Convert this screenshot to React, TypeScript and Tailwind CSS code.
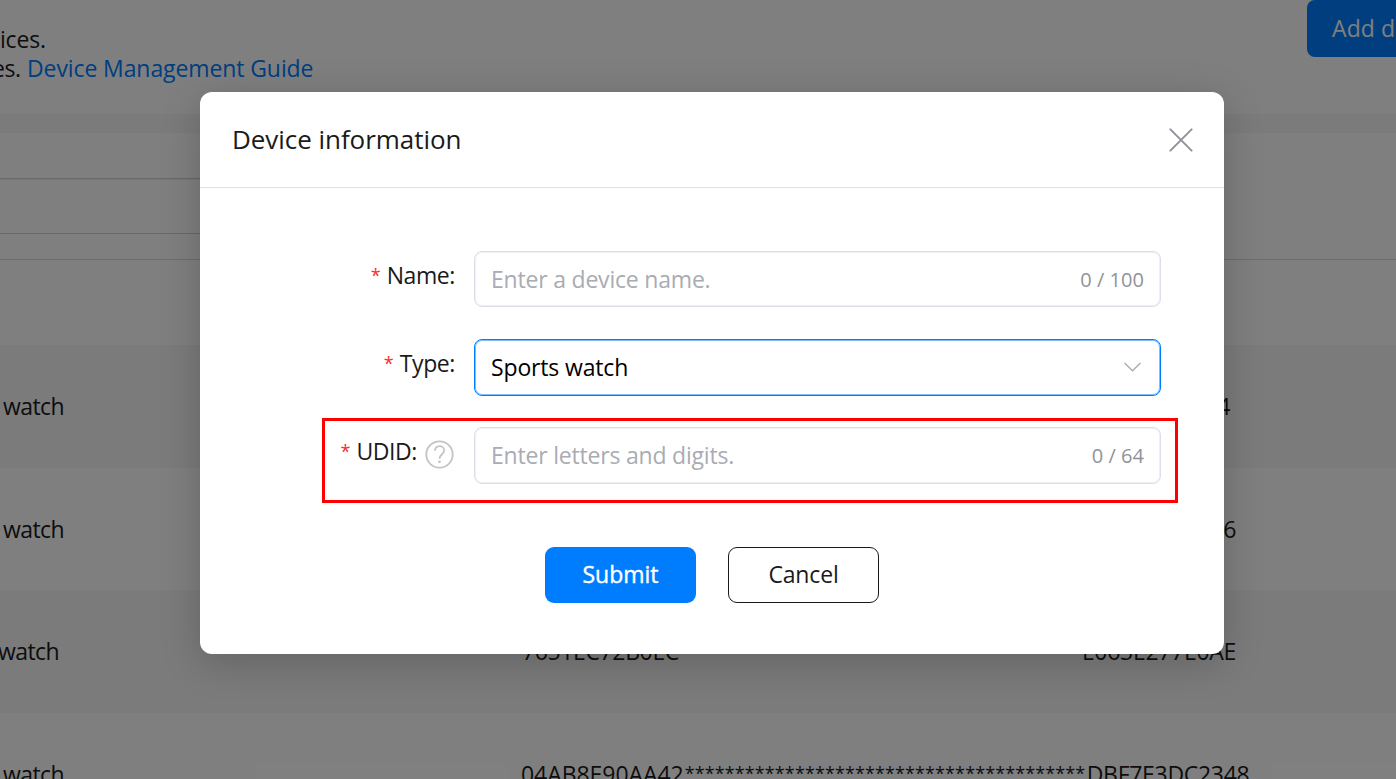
import type { ReactNode } from 'react';

const rows = [
  { type: 'watch', left: 3, a: '', b: '4', right: 1230, shade: true },
  { type: 'watch', left: 3, a: '', b: '6', right: 1236, shade: false },
  { type: 'watch', left: -2, a: '7651EC72B0EC', b: 'E063E277E0AE', right: 1236, shade: true },
];

function Background() {
  return (
    <div className="flex h-[779px] w-full flex-col bg-white text-[#1a1a1a]">
      <header className="flex h-[114px] justify-between">
        <div className="flex w-[320px] flex-col items-start whitespace-nowrap pt-[25px] leading-[29px]">
          <p className="tracking-[-0.2px]">ices.</p>
          <p className="-ml-[8px] flex">
            <span className="w-[35px] tracking-[-0.5px]">es.</span>
            <a className="tracking-[-0.1px] text-[#007dff]">Device Management Guide</a>
          </p>
        </div>
        <button className="-mr-[70px] h-[57px] w-[159px] overflow-hidden whitespace-nowrap rounded-[8px] bg-[#007dff] pl-[25px] text-left tracking-[0.1px] text-white">
          Add device
        </button>
      </header>
      <div className="h-[19px] bg-[#f6f6f6]" />
      <div className="flex h-[127px] flex-col border-b border-[#d8d8d8] pt-[45px]">
        <div className="h-[56px] w-[600px] border-y border-[#d0d3dc] shadow-[inset_0_1px_0_#eceef2]" />
      </div>
      <div className="h-[85px]" />
      {rows.map((r, i) => (
        <div key={i} className={r.shade ? 'flex h-[122.7px] items-center bg-[#f6f6f6]' : 'flex h-[122.7px] items-center pt-px'}>
          <span className="w-[524px] tracking-[-0.6px]" style={{ paddingLeft: Math.max(r.left, 0), marginLeft: Math.min(r.left, 0) }}>
            {r.type}
          </span>
          <span className="w-[200px] tracking-[-0.38px]">{r.a}</span>
          <span className="text-right tracking-[-0.3px]" style={{ width: r.right - 724 - Math.min(r.left, 0) }}>
            {r.b}
          </span>
        </div>
      ))}
      <div className="flex h-[66px] items-start overflow-hidden whitespace-nowrap pt-[44px]">
        <span className="w-[521px] shrink-0 pl-[3px] tracking-[-0.6px]">watch</span>
        <span className="tracking-[-0.05px]">04AB8E90AA42</span>
        <span className="w-[401px] shrink-0 pl-px pt-[3px] text-[18px] tracking-[0.1px]">****************************************</span>
        <span className="ml-[2px] tracking-[-0.3px]">DBF7E3DC2348</span>
      </div>
    </div>
  );
}

function Label({ children, help }: { children: ReactNode; help?: boolean }) {
  return (
    <div className="flex h-[49px] w-[255px] items-center justify-end whitespace-nowrap">
      <span className="mr-[6px] text-[18px] text-[#fa2a2d]">*</span>
      <span className="tracking-[-0.4px]">{children}</span>
      {help && (
        <svg className="ml-[8px] mr-[1px] mt-[5px] h-[29px] w-[29px]" viewBox="0 0 29 29" fill="none" stroke="#c4c4c4" strokeWidth="1.8">
          <circle cx="14.5" cy="14.5" r="13.2" />
          <path d="M9.9 10.8c0-2.8 1.9-4.6 4.6-4.6s4.6 1.8 4.6 4.2c0 3.9-4.6 3.8-4.6 8.3" />
          <circle cx="14.5" cy="21.8" r="1.4" fill="#c4c4c4" stroke="none" />
        </svg>
      )}
    </div>
  );
}

function Field({ label, help, placeholder, count }: { label: string; help?: boolean; placeholder: string; count: string }) {
  return (
    <div className="flex h-[56px]">
      <Label help={help}>{label}</Label>
      <div
        className={
          (help ? 'h-[57px] ' : 'h-[56px] pt-px ') +
          'ml-[19px] flex w-[687px] items-center justify-between rounded-[8px] border border-[#dcdfe8] pl-[17px] pr-[16px] text-[#a9acb3] shadow-[inset_0_0_0_1px_#eff0f4]'
        }
      >
        <span className="-ml-px tracking-[-0.2px]">{placeholder}</span>
        <span className="text-[20px] tracking-[0.05px] text-[#909399]">{count}</span>
      </div>
    </div>
  );
}

function Dialog() {
  return (
    <section className="absolute left-[200px] top-[92px] flex h-[562px] w-[1024px] flex-col rounded-[12px] bg-white text-[#1a1a1a] shadow-[0_8px_40px_rgba(0,0,0,0.2)]">
      <header className="flex h-[96px] items-center justify-between border-b border-[#e0e1e5] pl-[32px] pr-[31px]">
        <h2 className="-mt-px text-[26px] tracking-[-0.05px]">Device information</h2>
        <svg className="h-[24px] w-[24px]" viewBox="0 0 24 24" stroke="#909399" strokeWidth="2" strokeLinecap="round">
          <path d="M1.4 1.4l21.2 21.2M22.6 1.4l-21.2 21.2" />
        </svg>
      </header>
      <div className="flex flex-col gap-[32px] pt-[63px]">
        <Field label="Name:" placeholder="Enter a device name." count="0 / 100" />
        <div className="flex h-[56px]">
          <Label>Type:</Label>
          <div className="ml-[19px] flex h-[57px] w-[687px] items-center justify-between rounded-[8px] border border-[#007dff] pl-[17px] pr-[19px] text-black shadow-[inset_0_0_0_1px_#80beff]">
            <span className="-ml-px tracking-[-0.15px]">Sports watch</span>
            <svg className="mb-[1px] h-[10px] w-[17px]" viewBox="0 0 17 10" fill="none" stroke="#a9acb3" strokeWidth="1.4">
              <path d="M.6 1l7.9 7.8L16.4 1" />
            </svg>
          </div>
        </div>
        <Field label="UDID:" help placeholder="Enter letters and digits." count="0 / 64" />
      </div>
      <div className="mt-[64px] flex justify-center gap-[32px]">
        <button className="h-[56px] w-[151px] rounded-[9px] bg-[#007dff] pb-[2px] text-white [-webkit-text-stroke:0.4px_white]">Submit</button>
        <button className="h-[56px] w-[151px] rounded-[9px] border border-[#1a1a1a] pb-[2px] tracking-[-0.15px]">Cancel</button>
      </div>
    </section>
  );
}

export default function App() {
  return (
    <main className="relative h-[779px] w-[1396px] overflow-hidden font-['Open_Sans','Noto_Sans',sans-serif] text-[23px]">
      <Background />
      <div className="absolute inset-0 bg-black/50" />
      <Dialog />
      <div className="absolute left-[322px] top-[418px] h-[85px] w-[856px] border-[3px] border-[#ff0000]" />
    </main>
  );
}
